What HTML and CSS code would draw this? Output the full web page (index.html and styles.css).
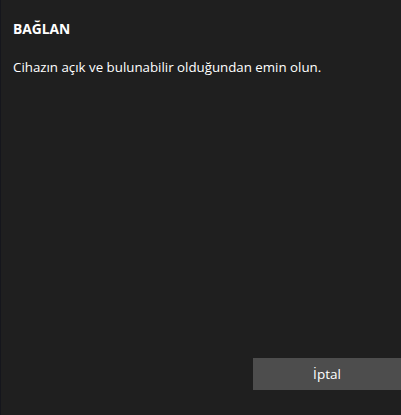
FILE: index.html
```html
<!DOCTYPE html>
<html lang="tr">
<head>
<meta charset="utf-8">
<link rel="stylesheet" href="styles.css">
</head>
<body>
<div class="dialog">
  <div class="content">
    <h1 class="title">BAĞLAN</h1>
    <p class="message">Cihazın açık ve bulunabilir olduğundan emin olun.</p>
  </div>
  <div class="actions">
    <button class="btn">İptal</button>
  </div>
</div>
</body>
</html>
```
FILE: styles.css
```css
html, body {
  margin: 0;
  padding: 0;
  width: 401px;
  height: 415px;
  background: #1f1f1f;
  overflow: hidden;
}
.dialog {
  box-sizing: border-box;
  width: 401px;
  height: 415px;
  border-left: 1px solid #15161c;
  display: flex;
  flex-direction: column;
  font-family: "Open Sans", "Noto Sans", sans-serif;
  color: #ffffff;
}
.content {
  flex: 1;
  padding: 19px 12px 0 12px;
}
.title {
  margin: 0;
  font-size: 13.8px;
  font-weight: 700;
  line-height: 20px;
}
.message {
  margin: 18px 0 0 0;
  font-size: 13.3px;
  line-height: 20px;
}
.actions {
  display: flex;
  justify-content: flex-end;
  padding-bottom: 25px;
}
.btn {
  width: 148px;
  height: 32px;
  border: none;
  background: #4d4d4d;
  color: #ffffff;
  font-family: inherit;
  font-size: 13.5px;
  padding: 0;
}
```
